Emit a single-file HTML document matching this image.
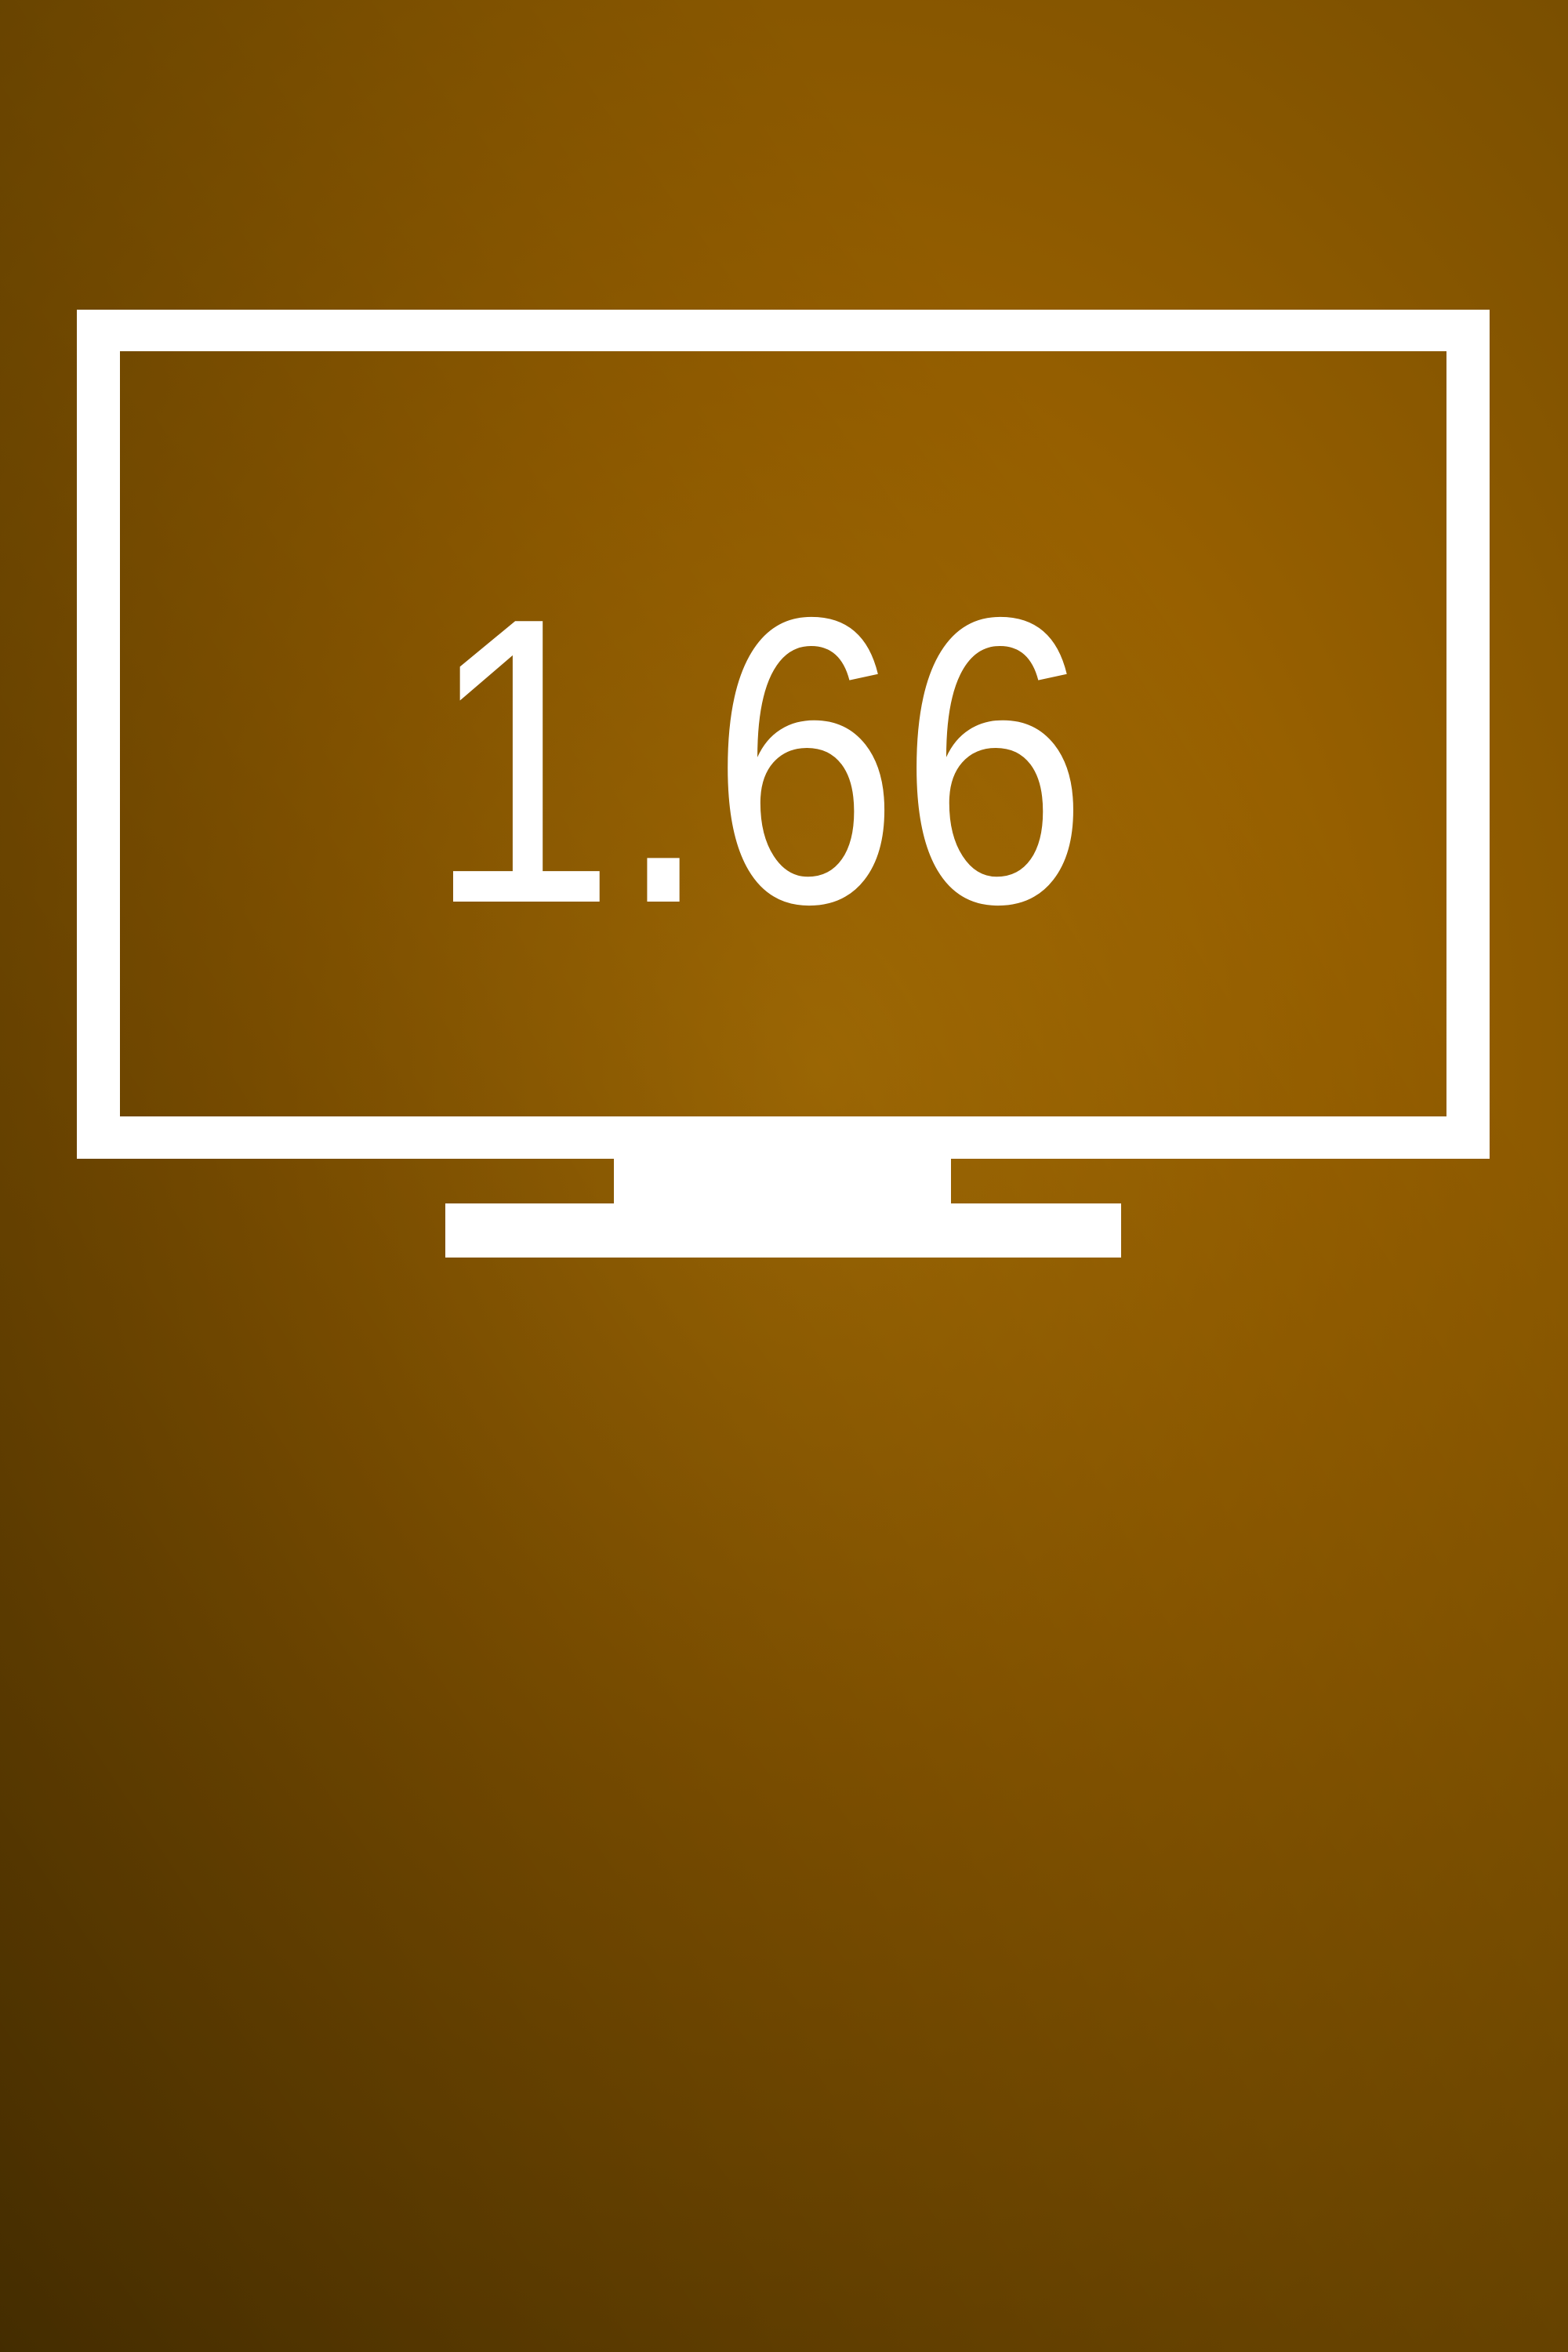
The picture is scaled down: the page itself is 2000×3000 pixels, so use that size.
<!DOCTYPE html>
<html><head><meta charset="utf-8"><style>
html,body{margin:0;padding:0}
body{width:2000px;height:3000px;position:relative;overflow:hidden;
background:
linear-gradient(to top right, rgba(0,0,0,0.4) 0%, rgba(0,0,0,0.15) 45%, rgba(0,0,0,0) 75%),
radial-gradient(ellipse 2100px 2700px at 1050px 1360px, #ad7204 0%, #965f00 33%, #7c5000 65%, #604000 100%);}
.w{position:absolute;background:#fff}
</style></head><body>
<div class="w" style="left:98px;top:395px;width:1802px;height:53px"></div>
<div class="w" style="left:98px;top:395px;width:55px;height:1083px"></div>
<div class="w" style="left:1845px;top:395px;width:55px;height:1083px"></div>
<div class="w" style="left:98px;top:1424px;width:1802px;height:54px"></div>
<div class="w" style="left:783px;top:1476px;width:430px;height:62px"></div>
<div class="w" style="left:568px;top:1535px;width:862px;height:69px"></div>
<svg style="position:absolute;left:0;top:0" width="2000" height="3000">
<text x="545" y="1150" font-family="Liberation Sans, sans-serif" font-size="520" fill="#fff" textLength="843" lengthAdjust="spacingAndGlyphs">1.66</text>
</svg>
</body></html>
